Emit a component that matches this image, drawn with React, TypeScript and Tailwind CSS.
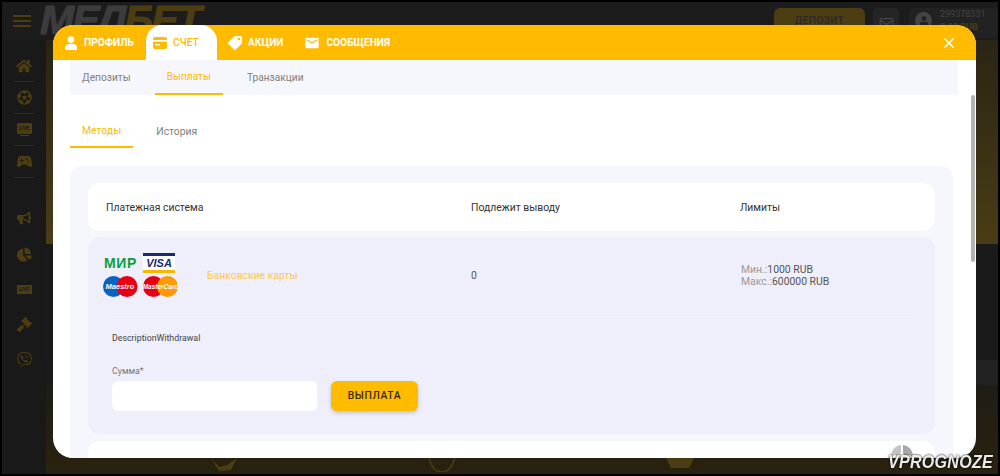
import { Mail, X } from "lucide-react";
import { FaBullhorn, FaChartPie, FaFutbol, FaGavel, FaHome, FaTag, FaUser, FaViber } from "react-icons/fa";
import { MdEmail, MdSportsEsports } from "react-icons/md";

const sideTop = [
  { id: "home", icon: <FaHome className="h-[16px] w-[16px]" /> },
  { id: "ball", icon: <FaFutbol className="h-[15px] w-[15px]" /> },
  {
    id: "live",
    icon: (
      <div className="flex flex-col items-center">
        <div className="flex h-[11px] w-[15px] items-center justify-center rounded-[1px] bg-[#4d3d12] text-[5px] leading-none font-bold text-[#1a1a1a]">
          LIVE
        </div>
        <div className="mt-[1px] h-[1px] w-[9px] bg-[#4d3d12]" />
      </div>
    ),
  },
  { id: "game", icon: <MdSportsEsports className="h-[19px] w-[19px]" /> },
];

const sideBottom = [
  <FaBullhorn key="mega" className="mb-[2px] h-[14px] w-[14px]" />,
  <FaChartPie key="pie" className="mt-[2px] h-[15px] w-[15px]" />,
  <div key="ticket" className="mt-[2px] flex h-[9px] w-[15px] items-center justify-center bg-[#4d3d12] text-[5px] leading-none font-bold text-[#1a1a1a]">
    LIVE
  </div>,
  <FaGavel key="gavel" className="mt-[2px] h-[15px] w-[15px]" />,
  <FaViber key="viber" className="mt-[2px] h-[15px] w-[15px]" />,
];

function PersonIcon() {
  return (
    <svg width="14" height="14" viewBox="0 0 14 14" fill="#fff" aria-hidden="true">
      <circle cx="7" cy="3.6" r="3.3" />
      <path d="M1 14v-2.6C1 9.2 3.6 7.8 7 7.8s6 1.4 6 3.6V14z" />
    </svg>
  );
}

function CardIcon() {
  return (
    <svg width="14" height="12" viewBox="0 0 14 12" aria-hidden="true">
      <rect width="14" height="12" rx="2" fill="#ffbb00" />
      <rect x="0" y="3" width="14" height="1.6" fill="#fff" />
      <rect x="2" y="7" width="5" height="1.4" fill="#fff" />
    </svg>
  );
}

function PaymentLogos() {
  return (
    <div className="mt-[-1px] grid w-[76px] grid-cols-[40px_36px] gap-y-[3px]">
      <div className="flex h-[20px] items-center">
        <span className="pl-[1px] font-['Liberation_Sans',sans-serif] text-[14px] leading-none font-bold tracking-[0.6px] text-[#0f9d3a]">
          МИР
        </span>
      </div>
      <div className="flex h-[20px] w-[32px] flex-col justify-between bg-white">
        <div className="h-[3px] bg-[#1a2a6c]" />
        <span className="text-center font-['Liberation_Sans',sans-serif] text-[11px] leading-none font-bold text-[#1a2a6c] italic">
          VISA
        </span>
        <div className="h-[3px] bg-[#f7b600]" />
      </div>
      <svg width="36" height="21" viewBox="0 0 36 21" aria-hidden="true">
        <circle cx="10.5" cy="10.5" r="10.5" fill="#0a62c4" />
        <circle cx="24" cy="10.5" r="10.5" fill="#e60012" />
        <text x="17" y="13" textAnchor="middle" fontSize="7.5" fontWeight="700" fontStyle="italic" fill="#fff" fontFamily="Liberation Sans, sans-serif">
          Maestro
        </text>
      </svg>
      <svg width="36" height="21" viewBox="0 0 36 21" aria-hidden="true">
        <circle cx="10.5" cy="10.5" r="10.5" fill="#e60012" />
        <circle cx="24.5" cy="10.5" r="10.5" fill="#ff9a00" />
        <text x="17.5" y="13" textAnchor="middle" fontSize="6.5" fontWeight="700" fontStyle="italic" fill="#fff" fontFamily="Liberation Sans, sans-serif">
          MasterCard
        </text>
      </svg>
    </div>
  );
}

export default function App() {
  return (
    <div className="relative h-[476px] w-[1000px] overflow-hidden bg-black font-['Roboto',sans-serif]">
      {/* Dimmed page behind the modal */}
      <div className="flex h-[472px] w-[996px] translate-x-[2px] translate-y-[2px] flex-col bg-[#191919]">
        <div className="flex h-[38px] items-center bg-[#1c1c1c] pl-[11px]">
          <div className="flex w-[18px] flex-col gap-[3px]">
            <div className="h-[2px] bg-[#4d3d12]" />
            <div className="h-[2px] bg-[#4d3d12]" />
            <div className="h-[2px] bg-[#4d3d12]" />
          </div>
          <div className="mt-[-2px] ml-[9px] flex font-['Liberation_Sans',sans-serif] text-[41px] leading-none font-bold tracking-[-2px] italic [-webkit-text-stroke:1px_currentColor]">
            <span className="text-[#3c3c3c]">МЕЛ</span>
            <span className="text-[#4d3d12]">БЕТ</span>
          </div>
          <div className="mt-[4px] ml-auto flex items-center gap-[8px]">
            <div className="flex h-[30px] w-[91px] items-start justify-center rounded-[6px] bg-[#4d3d12] pt-[5px] text-[10px] font-medium tracking-[0.5px] text-[#2a2a2a]">
              ДЕПОЗИТ
            </div>
            <div className="flex h-[30px] w-[26px] items-center justify-center rounded-[4px] bg-[#252525] text-[#444]">
              <Mail className="h-[15px] w-[15px]" />
            </div>
            <div className="ml-[2px] flex h-[30px] w-[89px] items-start gap-[8px] rounded-[4px] bg-[#222] pl-[6px] text-[9px] leading-[13px]">
              <div className="mt-[4px] flex h-[17px] w-[17px] items-center justify-center overflow-hidden rounded-full bg-[#444] text-[#222]">
                <FaUser className="h-[10px] w-[10px]" />
              </div>
              <div>
                <div className="text-[#444]">299378331</div>
                <div className="font-bold text-[#4d3d12]">0.00 RUB</div>
              </div>
            </div>
          </div>
        </div>
        <div className="flex flex-1">
          <div className="w-[44px] bg-[#191919] pt-[10px] text-[#4d3d12]">
            {sideTop.map((item) => (
              <div key={item.id} className="mx-[12px] flex h-[32px] items-center justify-center border-b border-[#2c2c2c] last:border-b-0">
                {item.icon}
              </div>
            ))}
            <div className="mt-[33px] flex flex-col items-center gap-[20px]">
              {sideBottom.map((icon, i) => (
                <div key={i} className="flex h-[15px] items-center justify-center">
                  {icon}
                </div>
              ))}
            </div>
          </div>
          <div className="flex flex-1 flex-col">
            <div className="h-[204px] bg-gradient-to-b from-[#2a2414] to-[#4a3c15]" />
            <div className="h-[116px] bg-[#1a1a1a]" />
            <div className="h-[25px] bg-gradient-to-r from-[#1a1a1a] to-[#222222]" />
            <div className="flex-1 bg-gradient-to-b from-[#1f1c14] to-[#2a2210]" />
          </div>
        </div>
      </div>

      {/* Faint artwork peeking out under the modal */}
      <div className="absolute bottom-[4px] left-[46px] flex h-[14px] w-[950px] text-[#4d3d12]">
        <svg width="950" height="14" viewBox="0 0 950 14" fill="none" aria-hidden="true">
          <path d="M165 0l8 9 8-2 10-7-6 12-12 1z" fill="currentColor" />
          <path d="M383 0c2 8 6 14 13 14s10-6 13-14" stroke="currentColor" strokeWidth="1.5" />
          <path d="M620 0h28l-5 10h-18z" fill="currentColor" />
        </svg>
      </div>

      {/* Modal */}
      <div className="absolute top-[25px] left-[53px] flex h-[433px] w-[923px] flex-col overflow-hidden rounded-[20px] bg-white">
        <div className="flex h-[35px] items-center bg-[#ffbb00] text-[10.2px] font-bold text-white">
          <div className="flex h-full w-[93px] items-center gap-[6px] pl-[11px]">
            <PersonIcon />
            ПРОФИЛЬ
          </div>
          <div className="flex h-full w-[71px] items-center gap-[6px] rounded-t-[16px] bg-white pl-[7px] font-medium text-[#ffbb00]">
            <CardIcon />
            СЧЕТ
          </div>
          <div className="flex h-full items-center gap-[6px] pl-[11px]">
            <FaTag className="h-[14px] w-[14px] rotate-90" />
            АКЦИИ
          </div>
          <div className="flex h-full items-center gap-[6px] pl-[21px]">
            <MdEmail className="h-[16px] w-[16px]" />
            СООБЩЕНИЯ
          </div>
          <button className="mr-[19px] ml-auto text-white">
            <X className="h-[16px] w-[16px]" strokeWidth={2.5} />
          </button>
        </div>

        <div className="relative flex-1 overflow-hidden pl-[17px]">
          <div className="flex h-[35px] w-[888px] gap-[12px] bg-[#f5f7fd] text-[10.2px] text-[#808080]">
            <div className="flex items-center px-[12px] pt-[1px]">Депозиты</div>
            <div className="flex items-center border-b-2 border-[#ffbb00] px-[12px] pt-[1px] text-[#ffbb00]">Выплаты</div>
            <div className="flex items-center px-[12px] pt-[1px]">Транзакции</div>
          </div>

          <div className="mt-[17px] flex h-[36px] gap-[11px] text-[10.4px] text-[#808080]">
            <div className="flex items-center border-b-2 border-[#ffbb00] px-[12px] pt-[4px] text-[#ffbb00]">Методы</div>
            <div className="flex items-center px-[12px] pt-[4px]">История</div>
          </div>

          <div className="mt-[18px] w-[883px] rounded-[12px] bg-[#f6f7fd] px-[18px] pt-[17px] text-[10.4px] text-[#333]">
            <div className="flex h-[48px] items-center rounded-[12px] bg-white pt-[1px] pl-[18px]">
              <div className="w-[365px]">Платежная система</div>
              <div className="w-[269px]">Подлежит выводу</div>
              <div>Лимиты</div>
            </div>

            <div className="mt-[6px] h-[197px] rounded-[12px] bg-[#eeeffa]">
              <div className="flex h-[79px] items-center pb-[2px] pl-[15px]">
                <PaymentLogos />
                <div className="ml-[28px] w-[264px] text-[#ffc94d]">Банковские карты</div>
                <div className="w-[270px] text-[#555]">0</div>
                <div className="leading-[12px] text-[#555]">
                  <div><span className="text-[#999]">Мин.:</span>1000 RUB</div>
                  <div><span className="text-[#999]">Макс.:</span>600000 RUB</div>
                </div>
              </div>
              <div className="mx-[24px] h-px bg-[#f4f5fc]" />
              <div className="px-[24px]">
                <div className="mt-[15px] text-[8.8px] leading-[12px] text-[#444]">DescriptionWithdrawal</div>
                <div className="mt-[21px] text-[8.8px] leading-[12px] text-[#777]">Сумма*</div>
                <div className="mt-[4px] flex items-center gap-[14px]">
                  <div className="h-[30px] w-[205px] rounded-[6px] bg-white" />
                  <button className="h-[30px] w-[87px] rounded-[6px] bg-[#ffbb00] text-[10.4px] font-medium tracking-[0.6px] text-[#3a2a00] shadow-[0_2px_4px_rgba(0,0,0,0.2)]">
                    ВЫПЛАТА
                  </button>
                </div>
              </div>
            </div>

            <div className="mt-[7px] h-[48px] rounded-[12px] bg-white" />
          </div>

          {/* Scrollbar */}
          <div className="absolute top-[35px] right-[1px] h-[167px] w-[4px] rounded-[2px] bg-[#b5b3b0]" />
        </div>
      </div>

      {/* Watermark */}
      <div className="absolute right-[7px] bottom-[5px] flex flex-col items-start">
        <svg width="24" height="12" viewBox="0 0 24 12" className="mb-[-2px] ml-[2px]" aria-hidden="true">
          <path d="M11 0C5 1 1 5 1 12l4-2 3 2 3-4z" fill="#c4c4c4" />
          <path d="M13 0c6 1 10 5 10 12l-4-2-3 2-3-4z" fill="#a8a8a8" />
        </svg>
        <div className="origin-bottom scale-y-[1.15] font-['Liberation_Sans',sans-serif] text-[16px] leading-none font-bold tracking-[0.3px] text-[#ececec] italic drop-shadow-[0_0_1px_#000]">
          VPROGNOZE
        </div>
      </div>
    </div>
  );
}
